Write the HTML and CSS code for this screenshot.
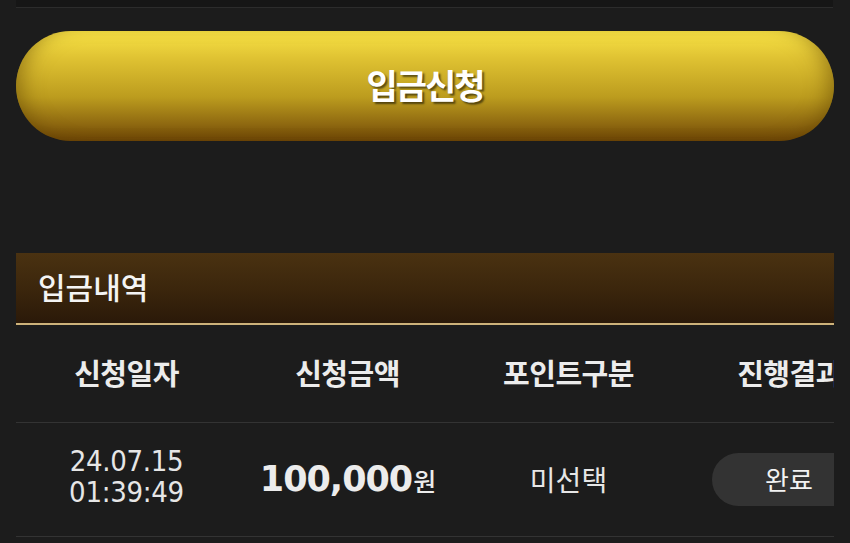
FILE: index.html
```html
<!DOCTYPE html>
<html lang="ko">
<head>
    <meta charset="UTF-8">
    <title>입금신청</title>
    <link rel="stylesheet" href="styles.css">
</head>
<body>
<div class="page">
    <div class="top-bar"></div>

    <button class="apply-btn" type="button">입금신청</button>

    <div class="history">
        <h2 class="history-title">입금내역</h2>
        <div class="history-scroll">
            <table class="history-table">
                <thead>
                    <tr>
                        <th>신청일자</th>
                        <th>신청금액</th>
                        <th>포인트구분</th>
                        <th>진행결과</th>
                    </tr>
                </thead>
                <tbody>
                    <tr>
                        <td class="date">24.07.15<br>01:39:49</td>
                        <td class="amount">100,000<span class="won">원</span></td>
                        <td class="point">미선택</td>
                        <td class="state"><span class="badge">완료</span></td>
                    </tr>
                </tbody>
            </table>
        </div>
    </div>
</div>
</body>
</html>
```

FILE: styles.css
```css
* {
    padding: 0;
    margin: 0;
    box-sizing: border-box;
}

body {
    background: #1c1c1c;
    color: #ececec;
    font-family: "Noto Sans CJK KR", "Noto Sans", sans-serif;
    overflow: hidden;
}

.page {
    padding: 0 16px;
}

.top-bar {
    height: 8px;
    margin-right: 1px;
    background: #161616;
    border-bottom: 1px solid #2c2c2c;
}

.apply-btn {
    display: block;
    width: 100%;
    height: 110px;
    margin-top: 23px;
    padding-bottom: 4px;
    border: 0;
    border-radius: 55px;
    background: linear-gradient(to bottom, #f9e346 0%, #dfc232 25%, #bc9c1e 60%, #8e6810 85%, #6c4506 100%);
    box-shadow: inset 18px 0 22px -14px rgba(90, 60, 0, 0.55), inset -18px 0 22px -14px rgba(90, 60, 0, 0.55);
    color: #fff;
    font-family: "Noto Sans CJK KR", sans-serif;
    font-size: 34px;
    font-weight: 700;
    letter-spacing: -2px;
    text-shadow: 2px 2px 2px rgba(0, 0, 0, 0.55);
    cursor: pointer;
}

.history {
    margin-top: 112px;
}

.history-title {
    height: 72px;
    padding-left: 22px;
    background: linear-gradient(to bottom, #4a3211 0%, #3a250c 55%, #2a1909 100%);
    border-bottom: 2px solid #cdb27a;
    font-size: 30px;
    font-weight: 500;
    line-height: 66px;
    color: #f4f4f4;
}

.history-scroll {
    overflow: hidden;
}

.history-table {
    width: 884px;
    border-collapse: collapse;
    table-layout: fixed;
}

.history-table th,
.history-table td {
    width: 221px;
    padding: 0;
    text-align: center;
    border-bottom: 1px solid #333;
}

.history-table th {
    height: 97px;
    padding-bottom: 2px;
    font-size: 29px;
    font-weight: 700;
    color: #ececec;
    letter-spacing: -0.5px;
}

.history-table td {
    height: 114px;
}

.history-table .date {
    padding-bottom: 4px;
    font-family: "DejaVu Sans Condensed", "Liberation Sans Narrow", sans-serif;
    font-size: 29px;
    line-height: 31px;
    color: #e6e6e6;
    letter-spacing: -0.3px;
}

.history-table .amount {
    font-family: "DejaVu Sans", sans-serif;
    font-size: 35px;
    font-weight: 700;
    color: #ececec;
    letter-spacing: -1px;
}

.won {
    margin-left: 1px;
    font-family: "Noto Sans CJK KR", sans-serif;
    font-size: 25px;
    font-weight: 500;
}

.history-table .point {
    font-size: 28px;
    color: #e6e6e6;
}

.history-table .state {
    text-align: left;
}

.badge {
    display: inline-block;
    width: 150px;
    height: 53px;
    margin-left: 33px;
    padding-left: 53px;
    border-radius: 27px;
    background: #333;
    font-size: 26px;
    line-height: 52px;
    color: #f2f2f2;
    white-space: nowrap;
}
```
